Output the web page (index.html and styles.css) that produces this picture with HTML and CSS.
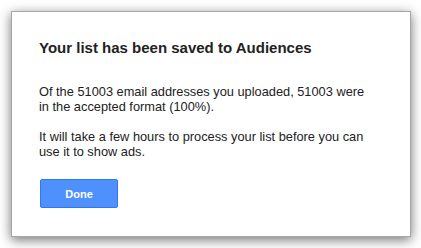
FILE: index.html
```html
<!DOCTYPE html>
<html>
<head>
<meta charset="utf-8">
<link rel="stylesheet" href="styles.css">
</head>
<body>
<div class="dialog">
  <h1 class="title">Your list has been saved to Audiences</h1>
  <p class="text">Of the 51003 email addresses you uploaded, 51003 were in the accepted format (100%).</p>
  <p class="text">It will take a few hours to process your list before you can use it to show ads.</p>
  <div class="actions"><button class="btn">Done</button></div>
</div>
</body>
</html>
```
FILE: styles.css
```css
html, body {
  margin: 0;
  padding: 0;
  background: #fff;
}
body {
  padding: 11px;
  font-family: "Liberation Sans", Arial, sans-serif;
  color: #222;
}
.dialog {
  box-sizing: border-box;
  width: 400px;
  height: 226px;
  background: #fff;
  border: 1px solid #a6a6a6;
  box-shadow: 0 3px 11px rgba(0,0,0,0.55);
  padding: 27px 34px 0 27px;
}
.title {
  margin: 0;
  font-size: 15px;
  line-height: 18px;
  font-weight: bold;
  white-space: nowrap;
}
.text {
  margin: 27px 0 0 0;
  font-size: 12.8px;
  line-height: 15px;
}
.text + .text {
  margin-top: 15px;
}
.actions {
  margin-top: 20px;
  padding-left: 1px;
}
.btn {
  box-sizing: border-box;
  width: 78px;
  height: 29px;
  background: #4d90fe;
  border: 1px solid #3079ed;
  border-radius: 2px;
  color: #fff;
  font-family: "Liberation Sans", Arial, sans-serif;
  font-size: 11px;
  font-weight: bold;
  padding: 0;
}
```
